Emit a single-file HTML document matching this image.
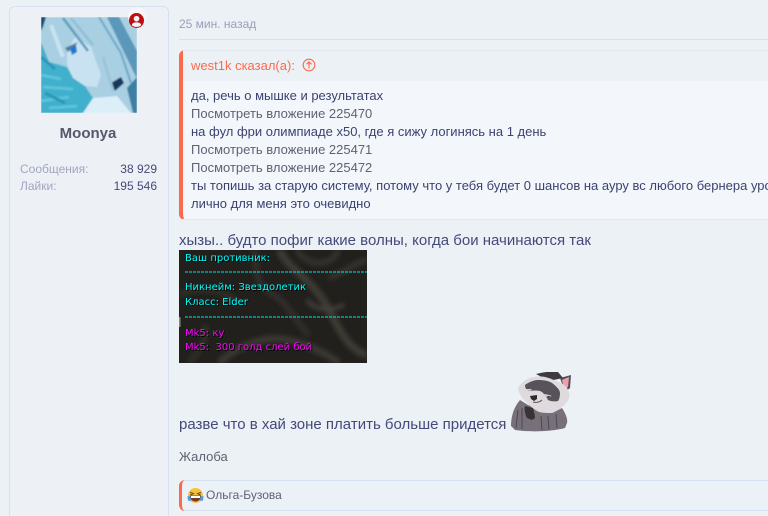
<!DOCTYPE html>
<html lang="ru"><head><meta charset="utf-8"><style>
html,body{margin:0;padding:0;width:768px;height:516px;overflow:hidden;background:#ecf1f6;font-family:"Liberation Sans",Arial,sans-serif}
#wrap{position:relative;width:768px;height:516px;overflow:hidden}
.a{position:absolute;white-space:nowrap}
#side{left:9px;top:6px;width:158px;height:510px;border:1px solid #d6e0f0;border-bottom:none;border-radius:6px 6px 0 0;background:#edf1f6;box-sizing:content-box}
.q{font-size:13px;color:#3c4270;left:191px;line-height:18px}
.g{color:#5e6272}
.m{font-size:15px;color:#45497a;left:179px;line-height:18px}
.t{font-family:"DejaVu Sans",sans-serif;font-size:10px;line-height:14px;left:185px;color:#00ffff;text-shadow:1px 1px 0 #000}
.p{color:#ff00ff}
</style></head><body><div id="wrap">
<div class="a" id="side"></div>
<svg class="a" style="left:41px;top:17px" width="96" height="96" viewBox="0 0 96 96">
<defs><filter id="b" x="0" y="0" width="100%" height="100%"><feGaussianBlur stdDeviation=".7"/></filter></defs>
<g filter="url(#b)">
<rect width="96" height="96" fill="#a8cfe2"/>
<path d="M0 0H5L2 10 0 14Z" fill="#14506e"/>
<path d="M0 25 8 45 26 50 32 61 44 69 52 81 42 96H0Z" fill="#3fb0cd"/>
<path d="M0 58 20 62M2 70 32 72M0 84 28 80M8 91 36 89" stroke="#5cc3da" stroke-width="3" fill="none"/>
<path d="M0 40 14 52M4 76 24 86" stroke="#2d96b8" stroke-width="3" fill="none"/>
<path d="M26 34 34 20 50 30 60 58 56 70 44 69 32 61 26 48Z" fill="#c8e2f1"/>
<path d="M66 0H78L96 34V62Z" fill="#5a97ba"/>
<path d="M58 0 80 36 90 66" stroke="#6da6c6" stroke-width="2" fill="none"/>
<path d="M22 1 47 34" stroke="#5f9cbd" stroke-width="2.500" fill="none"/>
<path d="M30 1 52 28" stroke="#8bbcd6" stroke-width="2" fill="none"/>
<path d="M10 8 22 40" stroke="#c9e3ef" stroke-width="4" fill="none"/>
<path d="M24 31 37 25 34 29 27 35Z" fill="#557f9f"/>
<path d="M29 32 35 28 36 35 31 38Z" fill="#1f78cf"/>
<path d="M70 66 80 60 83 66 74 74Z" fill="#14395e"/>
<path d="M42 96 52 81 76 79 90 96Z" fill="#dceef8"/>
<path d="M86 71 96 60V96H92Z" fill="#3d7ea2"/>
<path d="M62 40 72 74" stroke="#9cc4da" stroke-width="3" fill="none"/>
</g>
</svg>
<div class="a" style="left:128px;top:7px;width:19px;height:19px;border-radius:50%;background:#f4f6f9"></div>
<svg class="a" style="left:129px;top:13px" width="15" height="15" viewBox="0 0 16 16">
<circle cx="8" cy="8" r="8" fill="#c00d0d"/><circle cx="8" cy="6" r="3" fill="#f3f5f8"/><path d="M3 13C3.500 10.500 5.500 10 8 10S12.500 10.500 13 13C11.500 14.300 10 14.800 8 14.800S4.500 14.300 3 13Z" fill="#f3f5f8"/>
</svg>
<div class="a" style="left:8px;width:160px;text-align:center;top:125px;font-size:15px;font-weight:bold;line-height:18px;color:#55576a">Moonya</div>
<div class="a" style="left:20px;top:161px;font-size:12px;line-height:16px;color:#a1a5c2">Сообщения:</div>
<div class="a" style="right:611px;top:161px;font-size:12px;line-height:16px;color:#45497a">38 929</div>
<div class="a" style="left:20px;top:178px;font-size:12px;line-height:16px;color:#a1a5c2">Лайки:</div>
<div class="a" style="right:611px;top:178px;font-size:12px;line-height:16px;color:#45497a">195 546</div>

<div class="a" style="left:179px;top:16px;font-size:12px;line-height:16px;color:#9a9eb8">25 мин. назад</div>
<div class="a" style="left:179px;top:39px;width:589px;height:1px;background:#d5e1ef"></div>

<div class="a" style="left:179px;top:50px;width:589px;height:170px;border-radius:6px 0 0 6px;border-left:4px solid #fb6a4c;box-sizing:border-box;background:#f3f7fb;border-bottom:1px solid #e2e8f2"></div>
<div class="a" style="left:183px;top:50px;width:585px;height:31px;background:#ecf1f6;border-top:1px solid #e3e9f0;box-sizing:border-box"></div>
<div class="a" style="left:191px;top:57px;font-size:13px;line-height:18px;color:#fb6a4c">west1k сказал(а):</div>
<svg class="a" style="left:302px;top:58px" width="14" height="14" viewBox="0 0 14 14" fill="none" stroke="#fb6a4c" stroke-width="1.100"><circle cx="7" cy="7" r="5.800"/><path d="M7 10.500V4M4.500 6.300 7 3.800 9.500 6.300"/></svg>

<div class="a q" style="top:87px">да, речь о мышке и результатах</div>
<div class="a q g" style="top:105px">Посмотреть вложение 225470</div>
<div class="a q" style="top:123px">на фул фри олимпиаде x50, где я сижу логинясь на 1 день</div>
<div class="a q g" style="top:141px">Посмотреть вложение 225471</div>
<div class="a q g" style="top:159px">Посмотреть вложение 225472</div>
<div class="a q" style="top:177px;width:577px;overflow:hidden">ты топишь за старую систему, потому что у тебя будет 0 шансов на ауру вс любого бернера уровня</div>
<div class="a q" style="top:195px">лично для меня это очевидно</div>

<div class="a m" style="top:232px">хызы.. будто пофиг какие волны, когда бои начинаются так</div>

<svg class="a" style="left:179px;top:250px" width="188" height="113" viewBox="0 0 188 113">
<defs><filter id="n" x="0" y="0" width="100%" height="100%"><feGaussianBlur stdDeviation="2.500"/></filter></defs>
<rect width="188" height="113" fill="#22201d"/>
<g filter="url(#n)" fill="none">
<path d="M100 0C110 20 135 30 150 60 160 80 170 100 188 105" stroke="#3e3c36" stroke-width="7"/>
<path d="M40 113C60 95 85 85 110 90 130 95 150 105 160 113" stroke="#3a3832" stroke-width="7"/>
<path d="M118 0C125 14 150 20 160 0M150 28C165 22 178 12 188 10" stroke="#37352f" stroke-width="5"/>
<path d="M75 0C80 15 70 30 95 45 110 55 115 70 130 85" stroke="#322f2a" stroke-width="6"/>
<path d="M0 45C20 35 45 38 60 55M10 113C20 100 30 90 25 75" stroke="#2f2d27" stroke-width="6"/>
<path d="M128 50C135 60 150 62 165 55" stroke="#45433c" stroke-width="4"/>
</g>
<path d="M6 22H188M6 67H188" stroke="#00e4e4" stroke-width="1" stroke-dasharray="3 1"/>
<rect x="0" y="67" width="1.500" height="10" fill="#8a8a80"/>
</svg>
<div class="a t" style="top:252px">Ваш противник:</div>
<div class="a t" style="top:281px">Никнейм: Звездолетик</div>
<div class="a t" style="top:296px">Класс: Elder</div>
<div class="a t p" style="top:327px">Mk5: ку</div>
<div class="a t p" style="top:341px">Mk5:&nbsp; 300 голд слей бой</div>

<div class="a m" style="top:416px">разве что в хай зоне платить больше придется</div>

<svg class="a" style="left:510px;top:372px" width="64" height="60" viewBox="0 0 64 60">
<defs><filter id="r" x="-5%" y="-5%" width="110%" height="110%"><feGaussianBlur stdDeviation=".35"/></filter></defs>
<g filter="url(#r)">
<path d="M1 54C1 46 3 36 10 28L18 33 42 41 52 36C56 42 58 48 57 51L55 56C40 60 18 60 5 58Z" fill="#77707a"/>
<path d="M8 38 6 56M12 36 12 57M31 44 32 58M38 44 39 58M46 42 47 56" stroke="#4e484d" stroke-width="1" fill="none"/>
<path d="M50 6 61 3 60 16 55 20Z" fill="#55505a"/>
<path d="M52 8 59 5 58 15 54 17Z" fill="#eda0aa"/>
<path d="M26 2C34 0 42 -1 48 0L53 6 39 9Z" fill="#3d3a40"/>
<path d="M8 16C12 9 18 6 24 5 32 3 40 6 46 9 52 11 57 14 58 18 60 22 60 27 56 31 53 35 47 39 42 41 36 41 30 41 27 39 22 36 18 32 14 28 11 24 8 20 8 16Z" fill="#dedadd"/>
<path d="M15 13C19 10 24 8 28 8 34 8 39 9 42 11 46 14 50 18 50 21 50 25 49 28 48 29 44 30 40 29 38 28 36 24 33 20 30 19 25 18 20 19 18 19 16 18 15 15 15 13Z" fill="#58535a"/>
<path d="M33 22C36 22 39 23 42 24L38 25C36 25 34 24 33 22ZM16 17 21 17 22 18 17 19Z" fill="#d6d1d4"/>
<path d="M36 24 40 24 39 25Z" fill="#222"/>
<path d="M20 24 27 23 27 27 24 29 21 27Z" fill="#2f2a2e"/>
<path d="M23 30C26 31 30 30 32 28" stroke="#5d575c" stroke-width="1" fill="none"/>
<path d="M15 34 23 36C24 40 25 44 25 46L22 48 17 46C15 42 14 38 15 34Z" fill="#3a3036"/>
</g>
</svg>

<div class="a" style="left:179px;top:449px;font-size:13px;line-height:16px;color:#5e6272">Жалоба</div>

<div class="a" style="left:179px;top:480px;width:589px;height:31px;box-sizing:border-box;border:1px solid #d5e1ef;border-left:none;border-right:none;border-radius:6px 0 0 6px;background:#ecf1f7"></div>
<div class="a" style="left:179px;top:480px;width:8px;height:31px;box-sizing:border-box;border-left:3px solid #fb6a4c;border-radius:6px 0 0 6px"></div>
<svg class="a" style="left:187px;top:487px" width="17" height="17" viewBox="0 0 17 17">
<circle cx="8.500" cy="8.500" r="7.500" fill="#f7c13a"/>
<path d="M3 5.500 6.500 6.500 3.500 8M14 5.500 10.500 6.500 13.500 8" stroke="#5a4320" stroke-width="1" fill="none"/>
<path d="M3 8.500H14C14 12.500 11.500 14.500 8.500 14.500S3 12.500 3 8.500Z" fill="#7a3a1e"/>
<rect x="4" y="9" width="9" height="2" fill="#fff"/>
<path d="M.5 9 3.500 9.500 4 14 1 13.500ZM16.500 9 13.500 9.500 13 14 16 13.500Z" fill="#4a9be8"/>
</svg>
<div class="a" style="left:206px;top:487px;font-size:12px;line-height:16px;color:#5e6272">Ольга-Бузова</div>
</div></body></html>
